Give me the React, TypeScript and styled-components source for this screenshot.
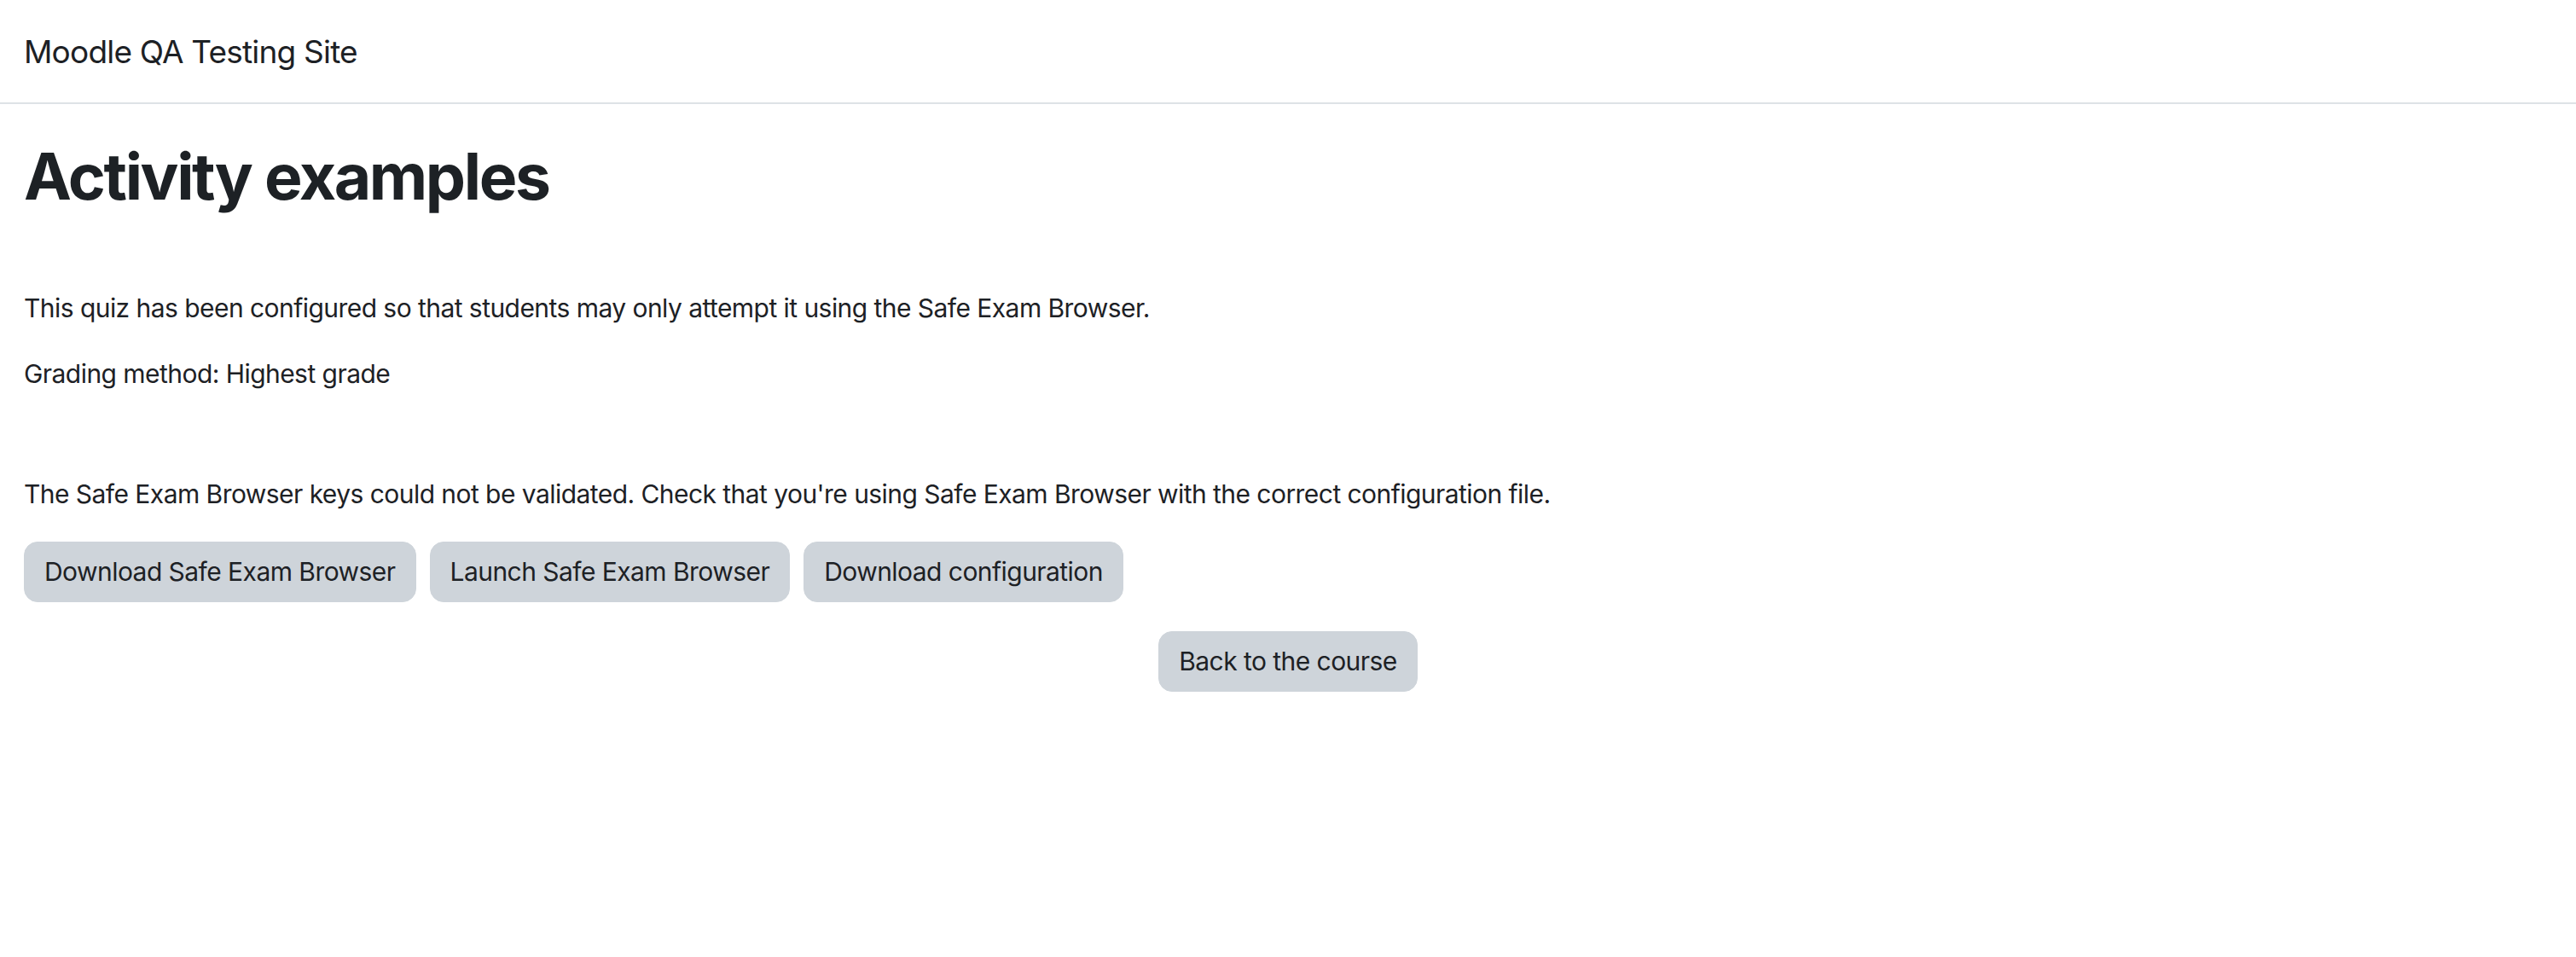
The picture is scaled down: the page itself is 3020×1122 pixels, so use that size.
import React from "react";
import styled, { createGlobalStyle } from "styled-components";

const Global = createGlobalStyle`
  html, body { margin: 0; padding: 0; background: #fff; }
  body {
    font-family: Inter, "Noto Sans", "Liberation Sans", sans-serif;
    color: #1d2125;
    -webkit-font-smoothing: antialiased;
  }
`;

const Page = styled.div`
  width: 3020px;
  min-height: 1122px;
  display: flex;
  flex-direction: column;
`;

const Navbar = styled.header`
  height: 122px;
  border-bottom: 2px solid #dee2e6;
  display: flex;
  align-items: center;
  padding: 0 28px;
  box-sizing: border-box;
`;

const Brand = styled.div`
  font-size: 37px;
  font-weight: 400;
  color: #1d2125;
  line-height: 1;
  letter-spacing: -0.8px;
`;

const Main = styled.main`
  padding: 40px 28px 0;
  display: flex;
  flex-direction: column;
`;

const Heading = styled.h1`
  margin: 0;
  font-size: 75px;
  font-weight: 700;
  line-height: 90px;
  letter-spacing: -2.4px;
`;

const Para = styled.p<{ $top?: number }>`
  margin: ${(p) => p.$top ?? 0}px 0 0;
  font-size: 30px;
  line-height: 45px;
  letter-spacing: -0.55px;
`;

const ButtonRow = styled.div<{ $center?: boolean }>`
  display: flex;
  gap: 16px;
  justify-content: ${(p) => (p.$center ? "center" : "flex-start")};
  margin-top: 33px;
`;

const Button = styled.button`
  font-family: inherit;
  font-size: 30px;
  line-height: 45px;
  letter-spacing: -0.55px;
  color: #1d2125;
  background: #ced4da;
  border: 1px solid #ced4da;
  border-radius: 16px;
  padding: 12px 23px;
  cursor: pointer;
`;

const BackRow = styled(ButtonRow)`
  margin-top: 34px;
  margin-left: -28px;
  margin-right: -28px;
`;

export default function App() {
  return (
    <>
      <Global />
      <Page>
        <Navbar>
          <Brand>Moodle QA Testing Site</Brand>
        </Navbar>
        <Main>
          <Heading>Activity examples</Heading>
          <Para $top={87}>
            This quiz has been configured so that students may only attempt it using the Safe Exam Browser.
          </Para>
          <Para $top={32}>Grading method: Highest grade</Para>
          <Para $top={96}>
            The Safe Exam Browser keys could not be validated. Check that you're using Safe Exam Browser with the correct configuration file.
          </Para>
          <ButtonRow>
            <Button>Download Safe Exam Browser</Button>
            <Button>Launch Safe Exam Browser</Button>
            <Button>Download configuration</Button>
          </ButtonRow>
          <BackRow $center>
            <Button>Back to the course</Button>
          </BackRow>
        </Main>
      </Page>
    </>
  );
}
